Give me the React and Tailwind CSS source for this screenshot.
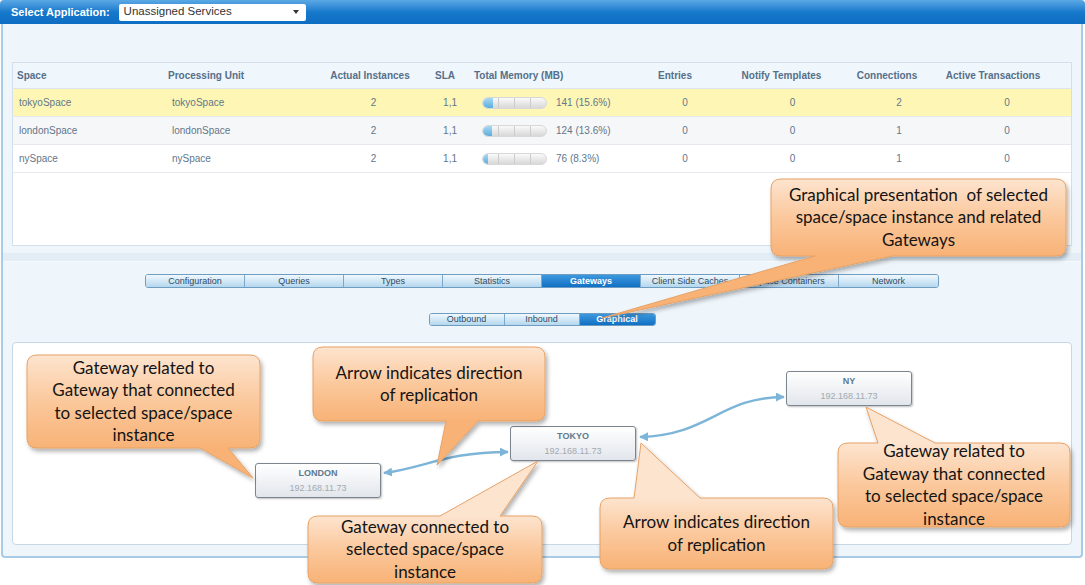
import React from 'react';

const rows = [
    { space: 'tokyoSpace', pu: 'tokyoSpace', inst: 2, sla: '1,1', mem: '141 (15.6%)', pct: 15.6, entries: 0, notify: 0, conn: 2, tx: 0, bg: 'bg-[#fdf6b4]' },
    { space: 'londonSpace', pu: 'londonSpace', inst: 2, sla: '1,1', mem: '124 (13.6%)', pct: 13.6, entries: 0, notify: 0, conn: 1, tx: 0, bg: 'bg-[#f6f7f8]' },
    { space: 'nySpace', pu: 'nySpace', inst: 2, sla: '1,1', mem: '76 (8.3%)', pct: 8.3, entries: 0, notify: 0, conn: 1, tx: 0, bg: 'bg-white' },
];

const tabs = ['Configuration', 'Queries', 'Types', 'Statistics', 'Gateways', 'Client Side Caches', 'Space Containers', 'Network'];
const subTabs = ['Outbound', 'Inbound', 'Graphical'];

const cols = 'grid grid-cols-[153px_155px_105px_40px_160px_118px_97px_116px_100px_1fr]';

// ── Callouts (page coordinates) ───────────────────────────
const callouts = [
    { x: 771, y: 179, w: 295, h: 77, side: 'bottom', b1: 815, b2: 892, tx: 602, ty: 318, lines: ['Graphical presentation\u00a0 of selected', 'space/space instance and related', 'Gateways'] },
    { x: 27, y: 355, w: 233, h: 93, side: 'bottom', b1: 200, b2: 228, tx: 253, ty: 478, lines: ['Gateway related to', 'Gateway that connected', 'to selected space/space', 'instance'] },
    { x: 313, y: 347, w: 232, h: 74, side: 'bottom', b1: 446, b2: 478, tx: 437, ty: 465, lines: ['Arrow indicates direction', 'of replication'] },
    { x: 308, y: 516, w: 234, h: 67, side: 'top', b1: 440, b2: 500, tx: 538, ty: 461, lines: ['Gateway connected to', 'selected space/space', 'instance'] },
    { x: 600, y: 498, w: 233, h: 71, side: 'top', b1: 634, b2: 700, tx: 641, ty: 443, lines: ['Arrow indicates direction', 'of replication'] },
    { x: 838, y: 443, w: 232, h: 84, side: 'top', b1: 878, b2: 935, tx: 866, ty: 407, lines: ['Gateway related to', 'Gateway that connected', 'to selected space/space', 'instance'] },
];

const calloutPath = ({ x, y, w, h, side, b1, b2, tx, ty }) => {
    const r = 10;
    const R = x + w;
    const B = y + h;
    if (side === 'bottom') {
        return `M${x + r},${y} H${R - r} Q${R},${y} ${R},${y + r} V${B - r} Q${R},${B} ${R - r},${B} H${b2} L${tx},${ty} L${b1},${B} H${x + r} Q${x},${B} ${x},${B - r} V${y + r} Q${x},${y} ${x + r},${y} Z`;
    }
    return `M${x + r},${y} H${b1} L${tx},${ty} L${b2},${y} H${R - r} Q${R},${y} ${R},${y + r} V${B - r} Q${R},${B} ${R - r},${B} H${x + r} Q${x},${B} ${x},${B - r} V${y + r} Q${x},${y} ${x + r},${y} Z`;
};

const MemoryBar = ({ pct }) => (
    <div className="relative w-[65px] h-[12px] rounded-full overflow-hidden border border-[#d8d8d8] bg-gradient-to-b from-[#fafafa] to-[#d8d8d8] flex">
        <div className="w-[16px] h-full border-r border-[#cdcdcd]" />
        <div className="w-[16px] h-full border-r border-[#cdcdcd]" />
        <div className="w-[16px] h-full border-r border-[#cdcdcd]" />
        <div className="absolute left-0 top-0 h-full rounded-l-full bg-gradient-to-b from-[#a6d8f2] to-[#5aaedd]" style={{ width: `${Math.max(5, (pct / 100) * 65)}px` }} />
    </div>
);

const GatewayNode = ({ name, ip, className }) => (
    <div className={`absolute w-[126px] h-[35px] rounded-[3px] border border-[#7b858f] bg-gradient-to-b from-white to-[#e2e6ec] shadow-[1px_1px_2px_rgba(0,0,0,0.25)] flex flex-col items-center justify-center ${className}`}>
        <div className="text-[9px] font-bold text-[#60798f] leading-[13px]">{name}</div>
        <div className="text-[9px] text-[#a2aab2] leading-[13px] mt-[2px]">{ip}</div>
    </div>
);

export default function App() {
    return (
        <div className="relative w-[1085px] h-[585px] overflow-hidden bg-white font-['Liberation_Sans',Arial,sans-serif]">
            {/* top bar */}
            <div className="h-[24px] rounded-t-[4px] bg-gradient-to-b from-[#5aa9e6] via-[#1679cb] to-[#0d6dc2] flex items-center pl-[11px]">
                <span className="text-white font-bold text-[11px]">Select Application:</span>
                <div className="ml-[9px] w-[187px] h-[17px] bg-white rounded-[2px] flex items-center justify-between pl-[5px] pr-[7px]">
                    <span className="text-[11.5px] text-[#333]">Unassigned Services</span>
                    <svg width="6" height="4" viewBox="0 0 6 4"><path d="M0 0 H6 L3 4 Z" fill="#333" /></svg>
                </div>
            </div>

            {/* frame */}
            <div className="ml-[1px] w-[1082px] border-x-2 border-b-2 border-[#a9cbe6] rounded-b-[4px] bg-[#eef5fb]">
                {/* upper panel */}
                <div className="px-[9px] pt-[38px] pb-[7px]">
                    <div className="h-[184px] bg-white border border-[#d5dfe9] text-[10px]">
                        <div className={`${cols} h-[26px] items-center bg-[#eff6fc] border-b border-[#dce5ee] font-bold text-[#566f89] whitespace-nowrap`}>
                            <div className="pl-[4px]">Space</div>
                            <div className="pl-[2px]">Processing Unit</div>
                            <div className="text-center pr-[7px]">Actual Instances</div>
                            <div className="text-right pr-[11px]">SLA</div>
                            <div className="pl-[8px]">Total Memory (MB)</div>
                            <div className="text-center pr-[20px]">Entries</div>
                            <div className="flex justify-center pr-[22px]"><span>Notify Templates</span></div>
                            <div className="text-center pr-[24px]">Connections</div>
                            <div className="flex justify-center pr-[28px]"><span>Active Transactions</span></div>
                            <div />
                        </div>
                        {rows.map(r => (
                            <div key={r.space} className={`${cols} h-[28px] items-center border-b border-[#e6e9ed] text-[#62768b] ${r.bg}`}>
                                <div className="pl-[6px]">{r.space}</div>
                                <div className="pl-[6px]">{r.pu}</div>
                                <div className="text-center">{r.inst}</div>
                                <div className="text-right pr-[9px]">{r.sla}</div>
                                <div className="pl-[16px] flex items-center gap-[9px]">
                                    <MemoryBar pct={r.pct} />
                                    <span>{r.mem}</span>
                                </div>
                                <div className="text-center">{r.entries}</div>
                                <div className="text-center">{r.notify}</div>
                                <div className="text-center">{r.conn}</div>
                                <div className="text-center">{r.tx}</div>
                                <div />
                            </div>
                        ))}
                    </div>
                </div>

                {/* separator */}
                <div className="h-[9px] bg-[#e2edf6] border-b border-[#f6fafd]" />

                {/* lower panel */}
                <div className="pt-[12px] pb-[11px] flex flex-col items-center">
                    <div className="flex h-[14px] border border-[#6f9dc2] rounded-[3px] overflow-hidden">
                        {tabs.map((t, i) => (
                            <div
                                key={t}
                                className={`w-[99px] flex items-center justify-center text-[9px] leading-none ${i < tabs.length - 1 ? 'border-r border-[#7ea8c9]' : ''} ${t === 'Gateways' ? 'bg-gradient-to-b from-[#3c98de] to-[#0f70c3] text-white font-bold' : 'bg-gradient-to-b from-[#f0f8fd] to-[#b4d7ee] text-[#2f4a63]'}`}
                            >
                                {t}
                            </div>
                        ))}
                    </div>

                    <div className="mt-[25px] flex h-[13px] border border-[#6f9dc2] rounded-[3px] overflow-hidden">
                        {subTabs.map((t, i) => (
                            <div
                                key={t}
                                className={`w-[75px] flex items-center justify-center text-[9px] leading-none ${i < subTabs.length - 1 ? 'border-r border-[#7ea8c9]' : ''} ${t === 'Graphical' ? 'bg-gradient-to-b from-[#3c98de] to-[#0f70c3] text-white font-bold' : 'bg-gradient-to-b from-[#f0f8fd] to-[#b4d7ee] text-[#2f4a63]'}`}
                            >
                                {t}
                            </div>
                        ))}
                    </div>

                    {/* graph canvas */}
                    <div className="mt-[16px] relative w-[1060px] h-[203px] bg-white border border-[#c8d7e3] rounded-[4px]">
                        <svg className="absolute inset-0" width="1058" height="201">
                            <defs>
                                <marker id="ah" viewBox="0 0 10 10" refX="9" refY="5" markerWidth="9" markerHeight="9" markerUnits="userSpaceOnUse" orient="auto-start-reverse">
                                    <path d="M0 0 L10 5 L0 10 Z" fill="#7db5d8" />
                                </marker>
                            </defs>
                            <path d="M371,130 C412,125 432,109 495,109" fill="none" stroke="#7db5d8" strokeWidth="2.5" markerStart="url(#ah)" markerEnd="url(#ah)" />
                            <path d="M627,94 C697,92 707,54 771,54" fill="none" stroke="#7db5d8" strokeWidth="2.5" markerStart="url(#ah)" markerEnd="url(#ah)" />
                        </svg>
                        <GatewayNode name="LONDON" ip="192.168.11.73" className="left-[242px] top-[120px]" />
                        <GatewayNode name="TOKYO" ip="192.168.11.73" className="left-[497px] top-[83px]" />
                        <GatewayNode name="NY" ip="192.168.11.73" className="left-[773px] top-[28px]" />
                    </div>
                </div>
            </div>

            {/* callout overlay */}
            <svg className="absolute inset-0 pointer-events-none" width="1085" height="585">
                <defs>
                    <filter id="cs" x="-20%" y="-20%" width="140%" height="150%">
                        <feDropShadow dx="2" dy="3" stdDeviation="2" floodColor="#000" floodOpacity="0.3" />
                    </filter>
                    {callouts.map((c, i) => (
                        <linearGradient key={i} id={`cg${i}`} gradientUnits="userSpaceOnUse" x1="0" y1={c.y} x2="0" y2={c.y + c.h}>
                            <stop offset="0" stopColor="#fde4cf" />
                            <stop offset="0.5" stopColor="#fbc89c" />
                            <stop offset="1" stopColor="#f8b276" />
                        </linearGradient>
                    ))}
                </defs>
                {callouts.map((c, i) => (
                    <path key={i} d={calloutPath(c)} fill={`url(#cg${i})`} stroke="#e6a266" strokeWidth="1" filter="url(#cs)" />
                ))}
            </svg>
            {callouts.map((c, i) => (
                <div
                    key={i}
                    className="absolute flex flex-col items-center justify-center text-center text-[17px] leading-[22.5px] text-[#141414] font-['Lato',sans-serif] pointer-events-none"
                    style={{ left: c.x, top: c.y, width: c.w, height: c.h }}
                >
                    {c.lines.map(l => <div key={l} className="whitespace-nowrap">{l}</div>)}
                </div>
            ))}
        </div>
    );
}
